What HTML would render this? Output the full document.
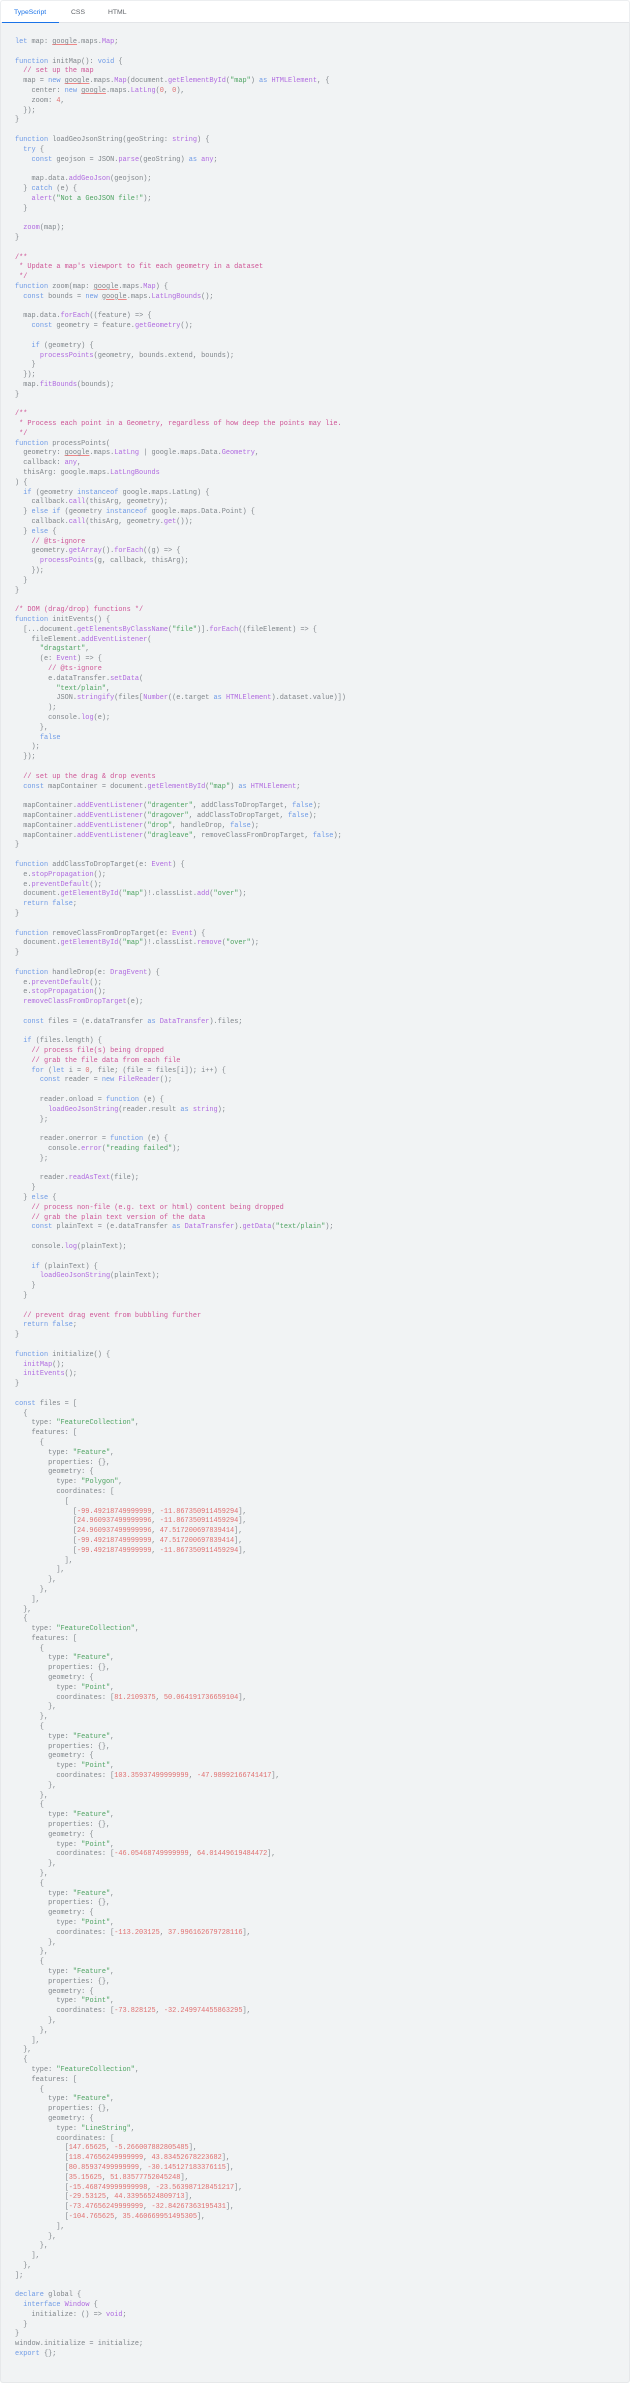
<!DOCTYPE html>
<html><head><meta charset="utf-8">
<style>
html,body{margin:0;padding:0;background:#fff;}
body{width:632px;height:2385px;position:relative;overflow:hidden;font-family:"Liberation Sans",sans-serif;}
.tabs{position:absolute;left:0;top:0;width:630px;height:23px;background:#fff;border:1px solid #eceef0;border-bottom:1px solid #e3e5e8;box-sizing:border-box;border-radius:3px 3px 0 0;}
.tab{position:absolute;top:8px;font-size:6.8px;color:#5f6368;}
.tab.a{color:#1a73e8;}
.ul{position:absolute;left:1px;top:21px;width:57px;height:2px;background:#1a73e8;}
.code{position:absolute;left:0;top:23px;width:630px;height:2360px;background:#f1f3f4;border:1px solid #e6e8ea;border-top:none;box-sizing:border-box;border-radius:0 0 3px 3px;}
pre{position:absolute;left:15px;top:38px;margin:0;font-family:"Liberation Mono",monospace;font-size:6.9px;line-height:9.8px;color:#80868b;white-space:pre;}
.k{color:#6f9be6;}
.f{color:#b06be0;}
.s{color:#4fa463;}
.n{color:#e07070;}
.c{color:#cf5596;}
.g{text-decoration:underline;text-decoration-color:#e88;text-decoration-thickness:0.6px;text-underline-offset:1px;}
</style></head><body>
<div class="tabs"><span class="tab a" style="left:13px">TypeScript</span><span class="tab" style="left:70px">CSS</span><span class="tab" style="left:107px">HTML</span><div class="ul"></div></div>
<div class="code"></div>
<pre><span class="k">let</span> map: <span class="g">google</span>.maps.<span class="f">Map</span>;

<span class="k">function</span> initMap(): <span class="k">void</span> {
  <span class="c">// set up the map</span>
  map = <span class="k">new</span> <span class="g">google</span>.maps.<span class="f">Map</span>(document.<span class="f">getElementById</span>(<span class="s">"map"</span>) <span class="k">as</span> <span class="f">HTMLElement</span>, {
    center: <span class="k">new</span> <span class="g">google</span>.maps.<span class="f">LatLng</span>(<span class="n">0</span>, <span class="n">0</span>),
    zoom: <span class="n">4</span>,
  });
}

<span class="k">function</span> loadGeoJsonString(geoString: <span class="f">string</span>) {
  <span class="k">try</span> {
    <span class="k">const</span> geojson = JSON.<span class="f">parse</span>(geoString) <span class="k">as</span> <span class="f">any</span>;

    map.data.<span class="f">addGeoJson</span>(geojson);
  } <span class="k">catch</span> (e) {
    <span class="f">alert</span>(<span class="s">"Not a GeoJSON file!"</span>);
  }

  <span class="f">zoom</span>(map);
}

<span class="c">/**
 * Update a map's viewport to fit each geometry in a dataset
 */</span>
<span class="k">function</span> zoom(map: <span class="g">google</span>.maps.<span class="f">Map</span>) {
  <span class="k">const</span> bounds = <span class="k">new</span> <span class="g">google</span>.maps.<span class="f">LatLngBounds</span>();

  map.data.<span class="f">forEach</span>((feature) =&gt; {
    <span class="k">const</span> geometry = feature.<span class="f">getGeometry</span>();

    <span class="k">if</span> (geometry) {
      <span class="f">processPoints</span>(geometry, bounds.extend, bounds);
    }
  });
  map.<span class="f">fitBounds</span>(bounds);
}

<span class="c">/**
 * Process each point in a Geometry, regardless of how deep the points may lie.
 */</span>
<span class="k">function</span> processPoints(
  geometry: <span class="g">google</span>.maps.<span class="f">LatLng</span> | google.maps.Data.<span class="f">Geometry</span>,
  callback: <span class="f">any</span>,
  thisArg: google.maps.<span class="f">LatLngBounds</span>
) {
  <span class="k">if</span> (geometry <span class="k">instanceof</span> google.maps.LatLng) {
    callback.<span class="f">call</span>(thisArg, geometry);
  } <span class="k">else if</span> (geometry <span class="k">instanceof</span> google.maps.Data.Point) {
    callback.<span class="f">call</span>(thisArg, geometry.<span class="f">get</span>());
  } <span class="k">else</span> {
    <span class="c">// @ts-ignore</span>
    geometry.<span class="f">getArray</span>().<span class="f">forEach</span>((g) =&gt; {
      <span class="f">processPoints</span>(g, callback, thisArg);
    });
  }
}

<span class="c">/* DOM (drag/drop) functions */</span>
<span class="k">function</span> initEvents() {
  [...document.<span class="f">getElementsByClassName</span>(<span class="s">"file"</span>)].<span class="f">forEach</span>((fileElement) =&gt; {
    fileElement.<span class="f">addEventListener</span>(
      <span class="s">"dragstart"</span>,
      (e: <span class="f">Event</span>) =&gt; {
        <span class="c">// @ts-ignore</span>
        e.dataTransfer.<span class="f">setData</span>(
          <span class="s">"text/plain"</span>,
          JSON.<span class="f">stringify</span>(files[<span class="f">Number</span>((e.target <span class="k">as</span> <span class="f">HTMLElement</span>).dataset.value)])
        );
        console.<span class="f">log</span>(e);
      },
      <span class="k">false</span>
    );
  });

  <span class="c">// set up the drag &amp; drop events</span>
  <span class="k">const</span> mapContainer = document.<span class="f">getElementById</span>(<span class="s">"map"</span>) <span class="k">as</span> <span class="f">HTMLElement</span>;

  mapContainer.<span class="f">addEventListener</span>(<span class="s">"dragenter"</span>, addClassToDropTarget, <span class="k">false</span>);
  mapContainer.<span class="f">addEventListener</span>(<span class="s">"dragover"</span>, addClassToDropTarget, <span class="k">false</span>);
  mapContainer.<span class="f">addEventListener</span>(<span class="s">"drop"</span>, handleDrop, <span class="k">false</span>);
  mapContainer.<span class="f">addEventListener</span>(<span class="s">"dragleave"</span>, removeClassFromDropTarget, <span class="k">false</span>);
}

<span class="k">function</span> addClassToDropTarget(e: <span class="f">Event</span>) {
  e.<span class="f">stopPropagation</span>();
  e.<span class="f">preventDefault</span>();
  document.<span class="f">getElementById</span>(<span class="s">"map"</span>)!.classList.<span class="f">add</span>(<span class="s">"over"</span>);
  <span class="k">return false</span>;
}

<span class="k">function</span> removeClassFromDropTarget(e: <span class="f">Event</span>) {
  document.<span class="f">getElementById</span>(<span class="s">"map"</span>)!.classList.<span class="f">remove</span>(<span class="s">"over"</span>);
}

<span class="k">function</span> handleDrop(e: <span class="f">DragEvent</span>) {
  e.<span class="f">preventDefault</span>();
  e.<span class="f">stopPropagation</span>();
  <span class="f">removeClassFromDropTarget</span>(e);

  <span class="k">const</span> files = (e.dataTransfer <span class="k">as</span> <span class="f">DataTransfer</span>).files;

  <span class="k">if</span> (files.length) {
    <span class="c">// process file(s) being dropped</span>
    <span class="c">// grab the file data from each file</span>
    <span class="k">for</span> (<span class="k">let</span> i = <span class="n">0</span>, file; (file = files[i]); i++) {
      <span class="k">const</span> reader = <span class="k">new</span> <span class="f">FileReader</span>();

      reader.onload = <span class="k">function</span> (e) {
        <span class="f">loadGeoJsonString</span>(reader.result <span class="k">as</span> <span class="f">string</span>);
      };

      reader.onerror = <span class="k">function</span> (e) {
        console.<span class="f">error</span>(<span class="s">"reading failed"</span>);
      };

      reader.<span class="f">readAsText</span>(file);
    }
  } <span class="k">else</span> {
    <span class="c">// process non-file (e.g. text or html) content being dropped</span>
    <span class="c">// grab the plain text version of the data</span>
    <span class="k">const</span> plainText = (e.dataTransfer <span class="k">as</span> <span class="f">DataTransfer</span>).<span class="f">getData</span>(<span class="s">"text/plain"</span>);

    console.<span class="f">log</span>(plainText);

    <span class="k">if</span> (plainText) {
      <span class="f">loadGeoJsonString</span>(plainText);
    }
  }

  <span class="c">// prevent drag event from bubbling further</span>
  <span class="k">return false</span>;
}

<span class="k">function</span> initialize() {
  <span class="f">initMap</span>();
  <span class="f">initEvents</span>();
}

<span class="k">const</span> files = [
  {
    type: <span class="s">"FeatureCollection"</span>,
    features: [
      {
        type: <span class="s">"Feature"</span>,
        properties: {},
        geometry: {
          type: <span class="s">"Polygon"</span>,
          coordinates: [
            [
              [<span class="n">-99.49218749999999</span>, <span class="n">-11.867350911459294</span>],
              [<span class="n">24.960937499999996</span>, <span class="n">-11.867350911459294</span>],
              [<span class="n">24.960937499999996</span>, <span class="n">47.517200697839414</span>],
              [<span class="n">-99.49218749999999</span>, <span class="n">47.517200697839414</span>],
              [<span class="n">-99.49218749999999</span>, <span class="n">-11.867350911459294</span>],
            ],
          ],
        },
      },
    ],
  },
  {
    type: <span class="s">"FeatureCollection"</span>,
    features: [
      {
        type: <span class="s">"Feature"</span>,
        properties: {},
        geometry: {
          type: <span class="s">"Point"</span>,
          coordinates: [<span class="n">81.2109375</span>, <span class="n">50.064191736659104</span>],
        },
      },
      {
        type: <span class="s">"Feature"</span>,
        properties: {},
        geometry: {
          type: <span class="s">"Point"</span>,
          coordinates: [<span class="n">103.35937499999999</span>, <span class="n">-47.98992166741417</span>],
        },
      },
      {
        type: <span class="s">"Feature"</span>,
        properties: {},
        geometry: {
          type: <span class="s">"Point"</span>,
          coordinates: [<span class="n">-46.05468749999999</span>, <span class="n">64.01449619484472</span>],
        },
      },
      {
        type: <span class="s">"Feature"</span>,
        properties: {},
        geometry: {
          type: <span class="s">"Point"</span>,
          coordinates: [<span class="n">-113.203125</span>, <span class="n">37.996162679728116</span>],
        },
      },
      {
        type: <span class="s">"Feature"</span>,
        properties: {},
        geometry: {
          type: <span class="s">"Point"</span>,
          coordinates: [<span class="n">-73.828125</span>, <span class="n">-32.249974455863295</span>],
        },
      },
    ],
  },
  {
    type: <span class="s">"FeatureCollection"</span>,
    features: [
      {
        type: <span class="s">"Feature"</span>,
        properties: {},
        geometry: {
          type: <span class="s">"LineString"</span>,
          coordinates: [
            [<span class="n">147.65625</span>, <span class="n">-5.266007882805485</span>],
            [<span class="n">118.47656249999999</span>, <span class="n">43.83452678223682</span>],
            [<span class="n">80.85937499999999</span>, <span class="n">-30.145127183376115</span>],
            [<span class="n">35.15625</span>, <span class="n">51.83577752045248</span>],
            [<span class="n">-15.468749999999998</span>, <span class="n">-23.563987128451217</span>],
            [<span class="n">-29.53125</span>, <span class="n">44.33956524809713</span>],
            [<span class="n">-73.47656249999999</span>, <span class="n">-32.84267363195431</span>],
            [<span class="n">-104.765625</span>, <span class="n">35.460669951495305</span>],
          ],
        },
      },
    ],
  },
];

<span class="k">declare</span> global {
  <span class="k">interface</span> <span class="f">Window</span> {
    initialize: () =&gt; <span class="f">void</span>;
  }
}
window.initialize = initialize;
<span class="k">export</span> {};</pre>
</body></html>
